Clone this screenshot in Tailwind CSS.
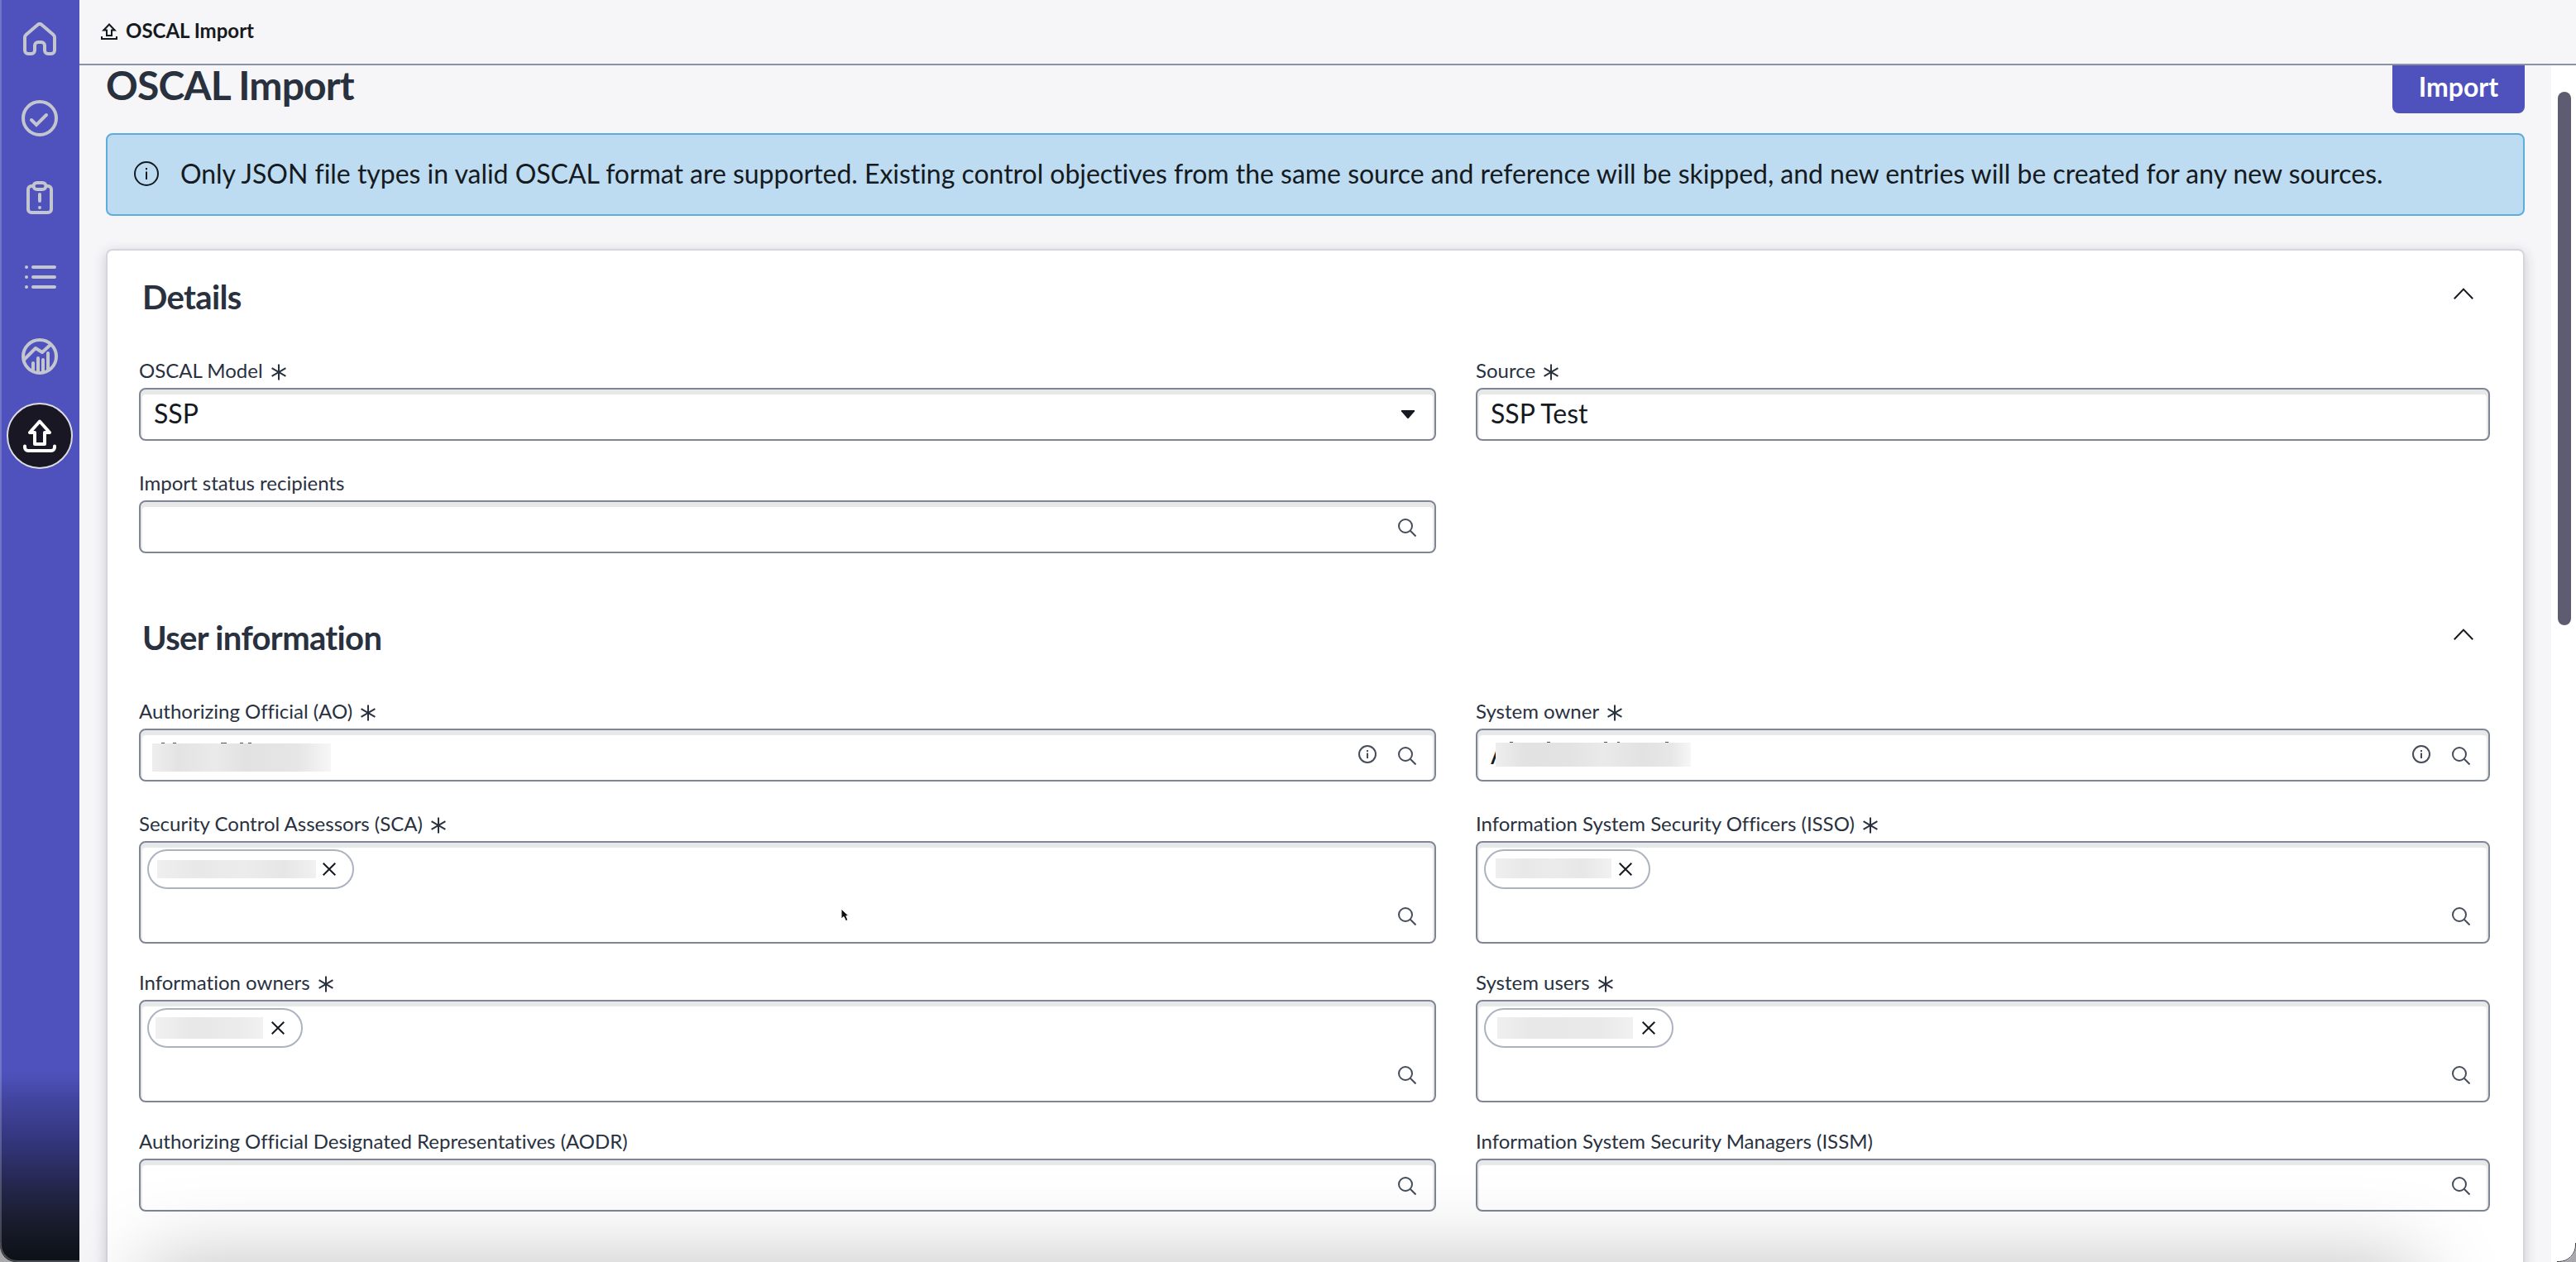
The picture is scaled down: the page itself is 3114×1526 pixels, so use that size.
<!DOCTYPE html>
<html lang="en">
<head>
    <meta charset="UTF-8">
    <meta name="viewport" content="width=device-width, initial-scale=1.0">
    <title>OSCAL Import</title>
    <script src="https://cdn.jsdelivr.net/npm/@tailwindcss/browser@4"></script>
</head>
<body class="relative flex h-screen overflow-hidden bg-[#f6f6f8] font-['Lato',sans-serif] text-[#151a20] [font-variant-ligatures:none]">

    <!-- Shared icons -->
    <svg class="hidden" xmlns="http://www.w3.org/2000/svg">
        <symbol id="icon-search" viewBox="0 0 22 22">
            <g fill="none" stroke="#454d5b" stroke-width="2"><circle cx="9" cy="9" r="8" /><path d="M14.8 14.8L21.5 21.5" /></g>
        </symbol>
        <symbol id="icon-info" viewBox="0 0 22 22">
            <circle cx="11" cy="11" r="10" fill="none" stroke="#454d5b" stroke-width="2" />
            <path d="M10 6h2v2h-2zM10 9.5h2V16h-2z" fill="#454d5b" />
        </symbol>
        <symbol id="icon-close" viewBox="0 0 16 16">
            <path d="M.7.7L15.3 15.3M15.3.7L.7 15.3" fill="none" stroke="#151a20" stroke-width="2" />
        </symbol>
        <symbol id="icon-required" viewBox="0 0 18 20">
            <path d="M9 .5v19M.6 5.2l16.8 9.6M17.4 5.2L.6 14.8" fill="none" stroke="#29313f" stroke-width="2" />
        </symbol>
        <symbol id="icon-chevron" viewBox="0 0 24 14">
            <path d="M.8 13.2L12 1.6l11.2 11.6" fill="none" stroke="#151a20" stroke-width="2" />
        </symbol>
    </svg>

    <!-- Sidebar -->
    <aside class="w-24 shrink-0 border-l-2 border-white/20 bg-[#4f52bd] bg-linear-[to_bottom,#4f52bd_0,#4f52bd_1295px,#42459f_1330px,#323479_1385px,#232548_1440px,#171a28_1485px,#0d1118_1524px] bg-origin-border">
        <nav class="-mt-px flex flex-col pr-0.5">
            <a href="#" class="flex h-24 items-center justify-center">
                <svg class="size-10" viewBox="0 0 40 40" fill="none" stroke="#c3c6cf" stroke-width="4" stroke-linejoin="round">
                    <path d="M2 18.500c0-1.400.5-2.500 1.500-3.400L17.500 3c1.500-1.300 3.500-1.300 5 0l14 12.100c1 .9 1.500 2 1.500 3.400V34a4 4 0 0 1-4 4h-4a4 4 0 0 1-4-4v-6a4 4 0 0 0-4-4h-4a4 4 0 0 0-4 4v6a4 4 0 0 1-4 4H6a4 4 0 0 1-4-4z" />
                </svg>
            </a>
            <a href="#" class="flex h-24 items-center justify-center">
                <svg class="size-11" viewBox="0 0 44 44" fill="none" stroke="#c3c6cf" stroke-width="4" stroke-linecap="round">
                    <circle cx="22" cy="22" r="20" />
                    <path d="M12 24l6 6 12-12" />
                </svg>
            </a>
            <a href="#" class="flex h-24 items-center justify-center">
                <svg class="h-10 w-8" viewBox="0 0 32 40" fill="none" stroke="#c3c6cf" stroke-width="4" stroke-linecap="round">
                    <path d="M8 6H6a4 4 0 0 0-4 4v24a4 4 0 0 0 4 4h20a4 4 0 0 0 4-4V10a4 4 0 0 0-4-4h-2" />
                    <rect x="8.5" y="2" width="15" height="8" rx="4" />
                    <path d="M16 16v8M16 32v.01" />
                </svg>
            </a>
            <a href="#" class="flex h-24 items-center justify-center pl-0.5">
                <svg class="h-7 w-[38px]" viewBox="0 0 38 28" fill="none" stroke="#c3c6cf" stroke-width="4" stroke-linecap="round">
                    <path d="M10 2h26M10 14h26M10 26h26M2 2v.01M2 14v.01M2 26v.01" />
                </svg>
            </a>
            <a href="#" class="flex h-24 items-center justify-center">
                <svg class="size-11" viewBox="0 0 44 44" fill="none" stroke="#c3c6cf" stroke-width="4">
                    <circle cx="22" cy="22" r="20" />
                    <path d="M3 26L17 12l8 5L36 7" stroke-linejoin="round" />
                    <path d="M14 30v8M20 24v17M26 26v15M32 18v20" stroke-linecap="round" />
                </svg>
            </a>
            <a href="#" class="flex h-24 items-center justify-center">
                <span class="flex size-20 shrink-0 items-center justify-center rounded-full border-2 border-[#dcdde3] bg-[#191724]">
                    <svg class="size-10" viewBox="0 0 40 40" fill="none" stroke="#fff" stroke-width="4" stroke-linejoin="round" stroke-linecap="round">
                        <path d="M20 2.5L8 16h6v14h12V16h6z" />
                        <path d="M2 32.500v1.500a4 4 0 0 0 4 4h28a4 4 0 0 0 4-4v-1.500" />
                    </svg>
                </span>
            </a>
        </nav>
    </aside>

    <div class="flex min-w-0 flex-1 flex-col">
        <!-- Tab header -->
        <header class="flex h-[79px] shrink-0 items-center gap-[10px] border-b-2 border-[#8c92a5] pb-[3px] pl-[26px]">
            <svg class="mt-0.5 size-5" viewBox="0 0 20 20" fill="none" stroke="#151a20" stroke-width="2">
                <path d="M10 1.500L3.300 8.500H7V15h6V8.500h3.700z" />
                <path d="M1 16v3h18v-3" />
            </svg>
            <span class="text-2xl leading-7 font-bold">OSCAL Import</span>
        </header>

        <div class="flex min-h-0 flex-1">
            <main class="min-w-0 flex-1 overflow-hidden px-8">
                <div class="flex h-[58px] items-start justify-between">
                    <h1 class="text-5xl leading-[47px] font-bold tracking-[-0.85px] text-[#29313f]">OSCAL Import</h1>
                    <button class="h-[58px] w-40 rounded-b-lg bg-[#4f52bd] pb-[7px] text-[32px] leading-8 font-bold text-white">Import</button>
                </div>

                <!-- Notice -->
                <div class="mt-6 flex h-[100px] items-center rounded-lg border-2 border-[#5dacde] bg-[#bddcf1] pl-8">
                    <svg class="mr-[26px] -mt-0.5 size-[30px]" viewBox="0 0 30 30">
                        <circle cx="15" cy="15" r="14" fill="none" stroke="#151a20" stroke-width="2" />
                        <path d="M14 8h2v2.200h-2zM14 12.500h2V22h-2z" fill="#151a20" />
                    </svg>
                    <p class="pb-0.5 text-[32px] leading-10 tracking-[-0.03px] whitespace-nowrap">Only JSON file types in valid OSCAL format are supported. Existing control objectives from the same source and reference will be skipped, and new entries will be created for any new sources.</p>
                </div>

                <!-- Form card -->
                <div class="mt-10 h-[1300px] rounded-lg border-2 border-[#d5d6dd] bg-white pt-8 pl-[38px] shadow-[0_4px_16px_rgba(30,30,60,0.2)]">
                    <div class="flex h-12 w-[2842px] items-start justify-between pr-5 pl-1">
                        <h2 class="text-[40px] leading-[49px] font-bold tracking-[-0.65px] text-[#29313f]">Details</h2>
                        <svg class="mt-[13px] h-3.5 w-6"><use href="#icon-chevron" /></svg>
                    </div>
                    <div class="mt-[50px] grid grid-cols-[1568px_1226px] gap-x-12 gap-y-8">
                        <div class="pb-1">
                            <label class="mb-2 flex h-7 items-center gap-[10px] pt-px text-2xl leading-7 text-[#29313f]">OSCAL Model <svg class="mt-1 h-5 w-[18px]"><use href="#icon-required" /></svg></label>
                            <div class="flex h-16 items-center justify-between rounded-lg border-2 border-[#7e8594] bg-white px-4 pr-6 text-[32px] shadow-[inset_0_4px_0_2px_#e7e9e9]">
                                <span class="pb-0.5">SSP</span>
                                <svg class="h-2.5 w-4" viewBox="0 0 16 10"><path d="M0 0h16v1.500L9 9.500q-1 1-2 0L0 1.500z" fill="#151a20" /></svg>
                            </div>
                        </div>
                        <div class="pb-1">
                            <label class="mb-2 flex h-7 items-center gap-[10px] pt-px text-2xl leading-7 text-[#29313f]">Source <svg class="mt-1 h-5 w-[18px]"><use href="#icon-required" /></svg></label>
                            <div class="flex h-16 items-center rounded-lg border-2 border-[#7e8594] bg-white px-4 pb-0.5 text-[32px] shadow-[inset_0_4px_0_2px_#e7e9e9]">SSP Test</div>
                        </div>
                        <div class="pb-1">
                            <label class="mb-2 flex h-7 items-center pt-px text-2xl leading-7 text-[#29313f]">Import status recipients</label>
                            <div class="flex h-16 items-center justify-end rounded-lg border-2 border-[#7e8594] bg-white pt-0.5 pr-[22px] shadow-[inset_0_4px_0_2px_#e7e9e9]">
                                <svg class="size-[22px]"><use href="#icon-search" /></svg>
                            </div>
                        </div>
                    </div>

                    <div class="mt-[74px] flex h-12 w-[2842px] items-start justify-between pr-5 pl-1">
                        <h2 class="text-[40px] leading-[49px] font-bold tracking-[-0.65px] text-[#29313f]">User information</h2>
                        <svg class="mt-[13px] h-3.5 w-6"><use href="#icon-chevron" /></svg>
                    </div>
                    <div class="mt-[50px] grid grid-cols-[1568px_1226px] gap-x-12 gap-y-8">
                        <div class="pb-1">
                            <label class="mb-2 flex h-7 items-center gap-[10px] pt-px text-2xl leading-7 text-[#29313f]">Authorizing Official (AO) <svg class="mt-1 h-5 w-[18px]"><use href="#icon-required" /></svg></label>
                            <div class="flex h-16 items-center rounded-lg border-2 border-[#7e8594] bg-white pr-[22px] pl-3.5 shadow-[inset_0_4px_0_2px_#e7e9e9]">
                                <span class="relative mt-1.5 h-[34px] w-[216px] bg-linear-[to_right,#eee_0%,#e3e3e3_15%,#eaeaea_35%,#e2e2e2_52%,#e6e6e6_82%,#f7f7f7_100%]">
                                    <svg class="absolute -top-px left-0 h-px w-[216px]" viewBox="0 0 216 1"><path d="M11 .5h4M25 .5h4M83 .5h7M106 .5h4M116 .5h4" stroke="#555" /></svg>
                                </span>
                                <svg class="mr-[26px] ml-auto -mt-0.5 size-[22px]"><use href="#icon-info" /></svg>
                                <svg class="mt-0.5 size-[22px]"><use href="#icon-search" /></svg>
                            </div>
                        </div>
                        <div class="pb-1">
                            <label class="mb-2 flex h-7 items-center gap-[10px] pt-px text-2xl leading-7 text-[#29313f]">System owner <svg class="mt-1 h-5 w-[18px]"><use href="#icon-required" /></svg></label>
                            <div class="flex h-16 items-center rounded-lg border-2 border-[#7e8594] bg-white pr-[22px] pl-4 shadow-[inset_0_4px_0_2px_#e7e9e9]">
                                <span class="w-1.5 pb-0.5 text-[32px]">A</span>
                                <span class="relative -mt-px h-[29px] w-[236px] bg-linear-[to_right,#eee_0%,#e2e2e2_15%,#e3e3e3_38%,#eaeaea_55%,#e2e2e2_75%,#e7e7e7_90%,#f7f7f7_100%]">
                                    <svg class="absolute -top-px left-0 h-px w-[236px]" viewBox="0 0 236 1"><path d="M17 .5h4M62 .5h4M131 .5h4M147 .5h3M205 .5h4" stroke="#555" /></svg>
                                </span>
                                <svg class="mr-[26px] ml-auto -mt-0.5 size-[22px]"><use href="#icon-info" /></svg>
                                <svg class="mt-0.5 size-[22px]"><use href="#icon-search" /></svg>
                            </div>
                        </div>
                        <div>
                            <label class="mb-2 flex h-7 items-center gap-[10px] pt-px text-2xl leading-7 text-[#29313f]">Security Control Assessors (SCA) <svg class="mt-1 h-5 w-[18px]"><use href="#icon-required" /></svg></label>
                            <div class="flex h-[124px] items-start justify-between rounded-lg border-2 border-[#7e8594] bg-white pt-2 pr-[22px] pl-2 shadow-[inset_0_4px_0_2px_#e7e9e9]">
                                <span class="flex h-12 w-[250px] items-center rounded-full border-2 border-[#adb2c0] pl-2.5">
                                    <span class="h-[22px] w-48 bg-linear-[to_right,#efefef,#e8e8e8_25%,#ececec_55%,#e6e6e6_80%,#f1f1f1]"></span>
                                    <svg class="ml-2 size-4"><use href="#icon-close" /></svg>
                                </span>
                                <svg class="mb-5 size-[22px] self-end"><use href="#icon-search" /></svg>
                            </div>
                        </div>
                        <div>
                            <label class="mb-2 flex h-7 items-center gap-[10px] pt-px text-2xl leading-7 text-[#29313f]">Information System Security Officers (ISSO) <svg class="mt-1 h-5 w-[18px]"><use href="#icon-required" /></svg></label>
                            <div class="flex h-[124px] items-start justify-between rounded-lg border-2 border-[#7e8594] bg-white pt-2 pr-[22px] pl-2 shadow-[inset_0_4px_0_2px_#e7e9e9]">
                                <span class="flex h-12 w-[201px] items-center rounded-full border-2 border-[#adb2c0] pl-3">
                                    <span class="-mt-0.5 h-6 w-[140px] bg-linear-[to_right,#efefef,#e8e8e8_25%,#ebebeb_50%,#e7e7e7_75%,#f1f1f1]"></span>
                                    <svg class="ml-[9px] size-4"><use href="#icon-close" /></svg>
                                </span>
                                <svg class="mb-5 size-[22px] self-end"><use href="#icon-search" /></svg>
                            </div>
                        </div>
                        <div>
                            <label class="mb-2 flex h-7 items-center gap-[10px] pt-px text-2xl leading-7 text-[#29313f]">Information owners <svg class="mt-1 h-5 w-[18px]"><use href="#icon-required" /></svg></label>
                            <div class="flex h-[124px] items-start justify-between rounded-lg border-2 border-[#7e8594] bg-white pt-2 pr-[22px] pl-2 shadow-[inset_0_4px_0_2px_#e7e9e9]">
                                <span class="flex h-12 w-[188px] items-center rounded-full border-2 border-[#adb2c0] pl-2">
                                    <span class="h-[26px] w-[130px] bg-linear-[to_right,#f1f1f1,#e7e7e7_35%,#ebebeb_75%,#f1f1f1]"></span>
                                    <svg class="ml-2.5 size-4"><use href="#icon-close" /></svg>
                                </span>
                                <svg class="mb-5 size-[22px] self-end"><use href="#icon-search" /></svg>
                            </div>
                        </div>
                        <div>
                            <label class="mb-2 flex h-7 items-center gap-[10px] pt-px text-2xl leading-7 text-[#29313f]">System users <svg class="mt-1 h-5 w-[18px]"><use href="#icon-required" /></svg></label>
                            <div class="flex h-[124px] items-start justify-between rounded-lg border-2 border-[#7e8594] bg-white pt-2 pr-[22px] pl-2 shadow-[inset_0_4px_0_2px_#e7e9e9]">
                                <span class="flex h-12 w-[229px] items-center rounded-full border-2 border-[#adb2c0] pl-3.5">
                                    <span class="h-[26px] w-[164px] bg-linear-[to_right,#efefef,#e8e8e8_25%,#e9e9e9_75%,#f1f1f1]"></span>
                                    <svg class="ml-[11px] size-4"><use href="#icon-close" /></svg>
                                </span>
                                <svg class="mb-5 size-[22px] self-end"><use href="#icon-search" /></svg>
                            </div>
                        </div>
                        <div class="pb-1">
                            <label class="mb-2 flex h-7 items-center pt-px text-2xl leading-7 text-[#29313f]">Authorizing Official Designated Representatives (AODR)</label>
                            <div class="flex h-16 items-center justify-end rounded-lg border-2 border-[#7e8594] bg-white pt-0.5 pr-[22px] shadow-[inset_0_4px_0_2px_#e7e9e9]">
                                <svg class="size-[22px]"><use href="#icon-search" /></svg>
                            </div>
                        </div>
                        <div class="pb-1">
                            <label class="mb-2 flex h-7 items-center pt-px text-2xl leading-7 text-[#29313f]">Information System Security Managers (ISSM)</label>
                            <div class="flex h-16 items-center justify-end rounded-lg border-2 border-[#7e8594] bg-white pt-0.5 pr-[22px] shadow-[inset_0_4px_0_2px_#e7e9e9]">
                                <svg class="size-[22px]"><use href="#icon-search" /></svg>
                            </div>
                        </div>
                    </div>
                </div>
            </main>

            <!-- Scrollbar -->
            <div class="w-[30px] shrink-0 bg-white pt-8 pl-2">
                <div class="h-[645px] w-4 rounded-full bg-[#5e5c70]"></div>
            </div>
        </div>
    </div>

    <!-- Shade rising from the bottom edge -->
    <div class="pointer-events-none absolute inset-x-24 bottom-0 h-32 overflow-hidden">
        <div class="absolute top-full right-24 left-20 h-40 shadow-[0_0_100px_rgba(0,0,0,0.25)]"></div>
    </div>

    <!-- Window corners -->
    <svg class="absolute bottom-0 left-0 h-6 w-24" viewBox="0 0 96 24">
        <path d="M0 4A20 20 0 0 0 20 24H0z" fill="#a9a9ad" />
        <path d="M1 0v3A20 20 0 0 0 21 23H96" fill="none" stroke="#4b4d52" stroke-width="2" />
    </svg>
    <svg class="absolute right-0 bottom-0 size-6" viewBox="0 0 24 24">
        <path d="M24 4A20 20 0 0 1 4 24H24z" fill="#a9a9ad" />
        <path d="M23.500 1v2A20 20 0 0 1 3.500 23.500H1" fill="none" stroke="#3a3a3c" />
    </svg>

    <!-- Mouse pointer -->
    <svg class="absolute top-[1097px] left-[1015px] h-5 w-3.5" viewBox="0 0 14 20">
        <path d="M2 2v12l3-2.500 2.500 5 2.500-1-2.200-5H11z" fill="#111" stroke="#fff" stroke-width="1" />
    </svg>
</body>
</html>
